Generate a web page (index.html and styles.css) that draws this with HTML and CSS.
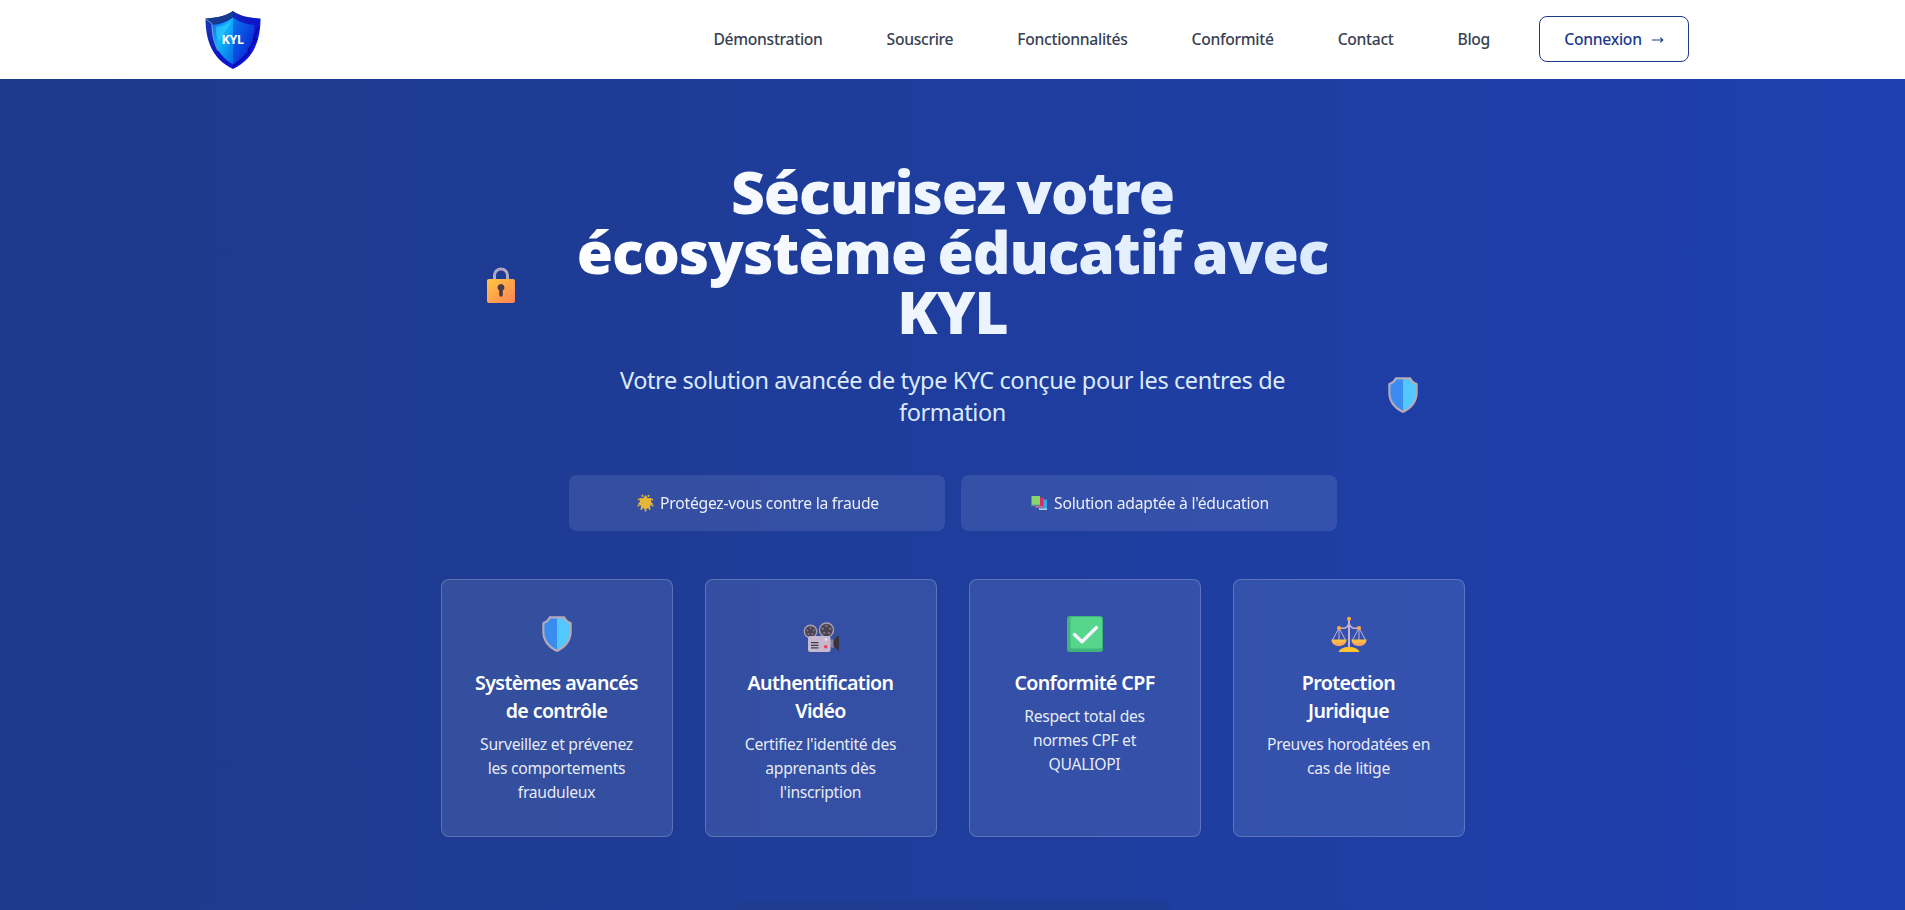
FILE: index.html
```html
<!DOCTYPE html>
<html lang="fr">
<head>
<meta charset="utf-8">
<title>KYL – Sécurisez votre écosystème éducatif</title>
<link rel="stylesheet" href="styles.css">
</head>
<body>
<svg class="defs" aria-hidden="true">
  <defs>
    <linearGradient id="gold" x1="0" y1="0" x2="1" y2="1"><stop offset="0" stop-color="#ffc63f"/><stop offset="1" stop-color="#ff8257"/></linearGradient>
    <linearGradient id="pan" x1="0" y1="0" x2="0" y2="1"><stop offset="0" stop-color="#ffc83d"/><stop offset="1" stop-color="#f99a6b"/></linearGradient>
    <linearGradient id="logoL" x1="0" y1="0" x2="1" y2="1"><stop offset="0" stop-color="#0d5fe8"/><stop offset=".45" stop-color="#12b4fb"/><stop offset="1" stop-color="#0668e6"/></linearGradient>
    <linearGradient id="logoR" x1="0" y1="0" x2="1" y2="1"><stop offset="0" stop-color="#0a7af0"/><stop offset="1" stop-color="#0a12cf"/></linearGradient>
    <linearGradient id="logoRim" x1="0" y1="0" x2="1" y2="1"><stop offset="0" stop-color="#1a3fb0"/><stop offset=".5" stop-color="#0d17c4"/><stop offset="1" stop-color="#1414e8"/></linearGradient>
    <symbol id="shield" viewBox="0 0 36 36">
      <path d="M11 .3h14c.9 0 1.100 .5 1.500 1.200 1.200 2.200 3.200 3.700 5 4.300.8.300 1.200.8 1.200 1.600V16c0 8.500-5.300 15.500-13.300 19.500-.9.400-1.900.4-2.800 0C8.600 31.500 3.300 24.500 3.300 16V7.400c0-.8.4-1.300 1.200-1.600 1.800-.6 3.800-2.100 5-4.300.4-.7.6-1.200 1.500-1.200z" fill="#b3abb9"/>
      <path d="M18 2.400h-6.500C10.200 5 8 6.800 5.400 7.700V16c0 7.500 4.700 13.600 12.600 17.500z" fill="#3a8cf0"/>
      <path d="M18 2.400h6.500c1.300 2.600 3.500 4.400 6.100 5.300V16c0 7.500-4.700 13.600-12.600 17.500z" fill="#52c8ff"/>
    </symbol>
  </defs>
</svg>

<header class="header">
  <svg class="logo" viewBox="0 0 58 60" role="img" aria-label="KYL">
    <path d="M29 1C22 6 12 8 1.500 8.500 1.500 30 8 49 29 59 50 49 56.500 30 56.500 8.500 46 8 36 6 29 1z" fill="url(#logoRim)"/>
    <path d="M29 1C22 6 12 8 1.500 8.500L8 14c9-.7 15-3 21-7.500z" fill="#173c8f"/>
    <path d="M29 7.500C23 12 16 14.500 7.500 15 8 31 14 46 29 54.500z" fill="url(#logoL)"/>
    <path d="M29 7.500C35 12 42 14.500 50.500 15 50 31 44 46 29 54.500z" fill="url(#logoR)"/>
    <path d="M12 17c6-.6 12-2.600 16-5.500L14 32c-1.500-5-2-10-2-15z" fill="#35d3ff" opacity=".55"/>
    <path d="M1.500 8.500L8 14c0 10 2 19 6 27" fill="none" stroke="#8fb3dc" stroke-width=".8"/>
    <path d="M55 17l-5.500 12 3 .5-8 10 1 3-16.500 14" fill="none" stroke="#0808a8" stroke-width="1.500"/>
    <text x="28.500" y="33.500" class="logo-text">KYL</text>
  </svg>
  <nav class="nav">
    <a>Démonstration</a><a>Souscrire</a><a>Fonctionnalités</a><a>Conformité</a><a>Contact</a><a>Blog</a>
  </nav>
  <a class="login">Connexion
    <svg width="13" height="10" viewBox="0 0 13 10"><path d="M.8 6h11M9.300 3.700L11.800 6 9.300 8.300" fill="none" stroke="currentColor" stroke-width="1.100"/></svg>
  </a>
</header>

<main class="hero">
  <svg class="float float-lock" viewBox="0 0 36 36">
    <path d="M11.500 14V8.500a6.500 6.500 0 0 1 13 0V14" fill="none" stroke="#b3a6c4" stroke-width="3"/>
    <rect x="4" y="12" width="28" height="24" rx="2" fill="url(#gold)"/>
    <path d="M18 17a3.500 3.500 0 0 0-1.800 6.500V28a1.800 1.800 0 0 0 3.600 0v-4.500A3.500 3.500 0 0 0 18 17z" fill="#4b384c"/>
  </svg>
  <svg class="float float-shield"><use href="#shield"/></svg>

  <h1 class="title">Sécurisez votre écosystème éducatif avec KYL</h1>
  <p class="subtitle">Votre solution avancée de type KYC conçue pour les centres de formation</p>

  <div class="pills">
    <div class="pill">
      <svg width="17" height="24" viewBox="0 0 17 24">
        <path d="M8.500 4l2.200 3.200 3.800-.2-.6 3.500 2.100 2.500-2.800 1.400-.2 3.400-2.800-.5-1.700 2-1.700-2-2.800.5-.2-3.400L1 13l2.100-2.500L2.500 7l3.800.2z" fill="#e6b637"/>
        <g fill="#e0b03a"><circle cx="5.500" cy="4.900" r="1.100"/><circle cx="11.500" cy="4.900" r="1.100"/><circle cx="1.800" cy="8.600" r="1"/><circle cx="15.200" cy="8.600" r="1"/><circle cx="1.500" cy="14.500" r="1.100"/><circle cx="15.500" cy="14.500" r="1.100"/><circle cx="4.300" cy="18" r="1"/><circle cx="12.700" cy="18" r="1"/><circle cx="8.500" cy="19.500" r="1.100"/></g>
      </svg>
      <span>Protégez-vous contre la fraude</span>
    </div>
    <div class="pill">
      <svg width="17" height="24" viewBox="0 0 17 24">
        <path d="M8 8.500h8V19H8z" fill="#35a8ee"/><path d="M8 17.500h8v1.500H8z" fill="#a9cbee"/>
        <path d="M4.500 6.500h8V17h-8z" fill="#d92f68"/><path d="M4.500 15.300h7.500v1.200H4.500z" fill="#a88cc0"/>
        <path d="M.5 5h8.500V15H.5z" fill="#86d46c"/><path d="M.5 13.700H9V15.200H.5z" fill="#5b8f8d"/>
      </svg>
      <span>Solution adaptée à l'éducation</span>
    </div>
  </div>

  <div class="cards">
    <article class="card">
      <svg class="card-icon"><use href="#shield"/></svg>
      <h3>Systèmes avancés de contrôle</h3>
      <p>Surveillez et prévenez les comportements frauduleux</p>
    </article>
    <article class="card">
      <svg class="card-icon" viewBox="0 0 36 36">
        <circle cx="7.500" cy="15.500" r="6.200" fill="#4a424e" stroke="#aaa0ad" stroke-width="1.400"/>
        <circle cx="23.500" cy="14" r="7" fill="#4a424e" stroke="#aaa0ad" stroke-width="1.400"/>
        <g fill="#7c6f86"><circle cx="7.500" cy="12" r="1.100"/><circle cx="4.300" cy="14.400" r="1.100"/><circle cx="10.700" cy="14.400" r="1.100"/><circle cx="5.500" cy="18.200" r="1.100"/><circle cx="9.500" cy="18.200" r="1.100"/><circle cx="23.500" cy="10" r="1.300"/><circle cx="19.800" cy="12.700" r="1.300"/><circle cx="27.200" cy="12.700" r="1.300"/><circle cx="21.200" cy="17" r="1.300"/><circle cx="25.800" cy="17" r="1.300"/></g>
        <path d="M27 24l4-1v9l-4-1z" fill="#8c8098"/><path d="M30.500 23.500l5-4c.3-.2.500 0 .5.300v14.400c0 .3-.2.500-.5.300l-5-4z" fill="#39323f"/>
        <rect x="5" y="20" width="22.500" height="16" rx="2" fill="#c5b9cf"/>
        <path d="M8 26.700h7.500M8 29.300h7.500M8 31.900h7.500" stroke="#433b49" stroke-width="1.300"/>
        <circle cx="23" cy="23.500" r="1.400" fill="#e5dcf0"/><circle cx="22.700" cy="30.800" r="1.800" fill="#f8395e"/>
      </svg>
      <h3>Authentification Vidéo</h3>
      <p>Certifiez l'identité des apprenants dès l'inscription</p>
    </article>
    <article class="card">
      <svg class="card-icon" viewBox="0 0 36 36">
        <rect width="36" height="36" rx="3" fill="#3fb57c"/><rect x="3.500" y="1" width="31.500" height="31.500" rx="2" fill="#55d68c"/>
        <path d="M7.500 18.500l7.500 7.200L29.500 11.500" fill="none" stroke="#f6f2fb" stroke-width="3.400" stroke-linecap="round" stroke-linejoin="round"/>
      </svg>
      <h3>Conformité CPF</h3>
      <p>Respect total des normes CPF et QUALIOPI</p>
    </article>
    <article class="card">
      <svg class="card-icon" viewBox="0 0 36 36">
        <path d="M18 3v29" stroke="#c3b2d4" stroke-width="2"/>
        <path d="M8 12.300h4.500c3 0 4.500-2 5.500-5 1 3 2.500 5 5.500 5H28" fill="none" stroke="#c3b2d4" stroke-width="1.500"/>
        <path d="M8 12L1.500 24M8 12l6.500 12M8 12v12M28 12l-6.500 12M28 12l6.500 12M28 12v12" fill="none" stroke="#c3b2d4" stroke-width="1"/>
        <path d="M.5 23.500h15c0 4-3 6.500-7.500 6.500S.5 27.500.5 23.500zM20.500 23.500h15c0 4-3 6.500-7.500 6.500s-7.500-2.500-7.500-6.500z" fill="url(#pan)"/>
        <g fill="#ffae30"><circle cx="18" cy="2.700" r="2"/><circle cx="8" cy="12" r="2"/><circle cx="28" cy="12" r="2"/></g>
        <path d="M7.500 36c1-3 5-5 10.500-5s9.500 2 10.500 5z" fill="#ffc52e"/>
      </svg>
      <h3>Protection Juridique</h3>
      <p>Preuves horodatées en cas de litige</p>
    </article>
  </div>
  <div class="panel"></div>
</main>
</body>
</html>
```
FILE: styles.css
```css
* { box-sizing: border-box; margin: 0; padding: 0; }
body {
  height: 910px;
  overflow: hidden;
  display: flex;
  flex-direction: column;
  font-family: "Noto Sans", "Open Sans", sans-serif;
  font-size: 15.7px;
  line-height: 24px;
  background: #fff;
}
.defs { position: absolute; width: 0; height: 0; }

.header {
  flex: none;
  display: flex;
  align-items: center;
  height: 79px;
  padding: 0 216px 0 204px;
}
.logo { width: 58px; height: 60px; margin-top: 1px; }
.logo-text {
  font-size: 12.5px;
  font-weight: 700;
  fill: #fff;
  text-anchor: middle;
  letter-spacing: -.3px;
}
.nav {
  display: flex;
  gap: 64px;
  margin-left: auto;
  margin-right: 49px;
  padding-bottom: 2px;
  color: #374151;
  font-weight: 500;
  letter-spacing: -.32px;
}
.login {
  display: flex;
  align-items: center;
  justify-content: center;
  gap: 9px;
  width: 150px;
  height: 46px;
  margin-top: -1px;
  border: 1px solid #1e3a8a;
  border-radius: 8px;
  color: #1e3a8a;
  font-weight: 500;
  letter-spacing: -.3px;
}

.hero {
  position: relative;
  flex: 1;
  display: flex;
  flex-direction: column;
  align-items: center;
  padding-top: 80px;
  text-align: center;
  color: #fff;
  background: linear-gradient(to right, #1e3a8a, #1e40af);
}
.float { position: absolute; width: 36px; height: 36px; }
.float-lock { left: 483px; top: 188px; }
.float-shield { left: 1385px; top: 298px; }

.title {
  width: 768px;
  height: 204px;
  padding-top: 2px;
  font-size: 58.8px;
  line-height: 60px;
  font-weight: 900;
  letter-spacing: -1.1px;
  word-spacing: -3px;
  color: transparent;
  background: linear-gradient(to right, #fff, #dbeafe);
  -webkit-background-clip: text;
  background-clip: text;
}
.subtitle {
  width: 720px;
  height: 65px;
  padding-top: 1px;
  font-size: 23.5px;
  line-height: 32px;
  letter-spacing: -.4px;
  color: #dbeafe;
}
.pills {
  display: grid;
  grid-template-columns: repeat(2, 376px);
  gap: 16px;
  margin-top: 47px;
}
.pill {
  display: flex;
  align-items: center;
  justify-content: center;
  gap: 6px;
  height: 56px;
  padding-left: 3px;
  border-radius: 8px;
  background: rgba(255, 255, 255, .1);
  letter-spacing: -.24px;
}
.pill span { opacity: .9; }
.cards {
  display: grid;
  grid-template-columns: repeat(4, 232px);
  gap: 32px;
  margin-top: 48px;
}
.card {
  height: 258px;
  padding: 36px 32px 32px;
  border: 1px solid rgba(255, 255, 255, .2);
  border-radius: 8px;
  background: rgba(255, 255, 255, .1);
  letter-spacing: -.3px;
}
.card-icon { display: block; width: 36px; height: 36px; margin: 0 auto 17px 65px; }
.card h3 {
  margin-bottom: 7px;
  font-size: 19.6px;
  line-height: 28px;
  font-weight: 600;
  letter-spacing: -.62px;
}
.card p { color: rgba(255, 255, 255, .9); }
.panel {
  width: 432px;
  height: 9px;
  margin-top: 64px;
  border-radius: 8px 8px 0 0;
  background: rgba(30, 58, 138, .6);
}
```
